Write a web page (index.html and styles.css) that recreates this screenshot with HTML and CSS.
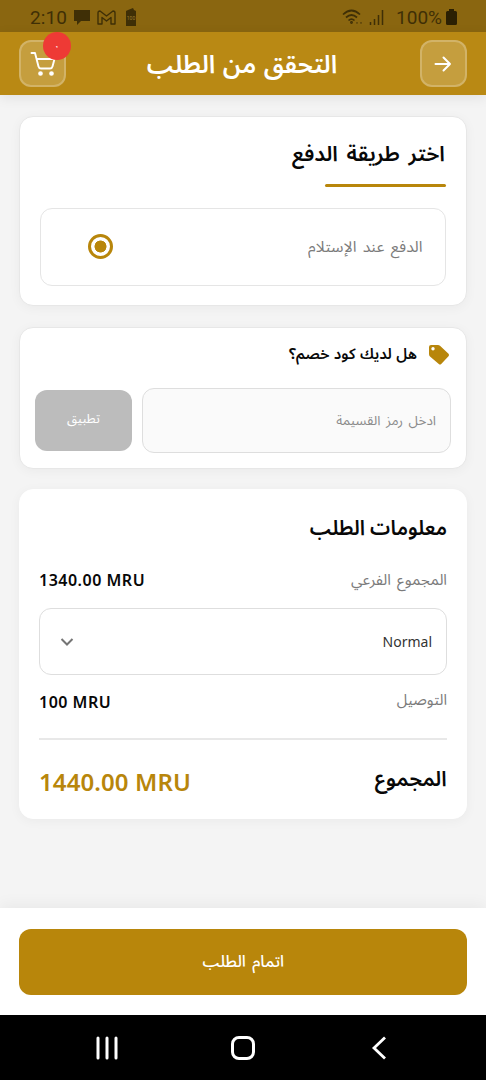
FILE: index.html
```html
<!DOCTYPE html>
<html lang="ar" dir="rtl">
<head>
<meta charset="utf-8">
<title>التحقق من الطلب</title>
<link rel="stylesheet" href="styles.css">
</head>
<body>
<div class="screen">
  <div class="status" dir="ltr">
    <div class="status-left">
      <span class="clock">2:10</span>
      <svg class="ico-chat" width="18" height="17" viewBox="0 0 18 17"><path d="M1 1h16v11H8l-4 4v-4H1z" fill="currentColor"/></svg>
      <svg class="ico-mail" width="19" height="15" viewBox="0 0 19 15"><path d="M1 14V3Q1 1 3 1l6.500 5L16 1q2 0 2 2v11h-4V7.500L9.500 11 5 7.500V14z" fill="none" stroke="currentColor" stroke-width="1.400" stroke-linejoin="round"/></svg>
      <svg class="ico-batt" width="12" height="18" viewBox="0 0 12 18"><path d="M3 2l5-2 1 2 2 1v15H1V3z" fill="currentColor"/><text x="6" y="12" font-size="5" text-anchor="middle" class="batt-text">100</text></svg>
    </div>
    <div class="status-right">
      <svg class="ico-wifi" width="21" height="16" viewBox="0 0 21 16" fill="none" stroke="currentColor" stroke-width="1.700"><path d="M1 5.500Q9.500-2.500 18 5.500M4 8.500q5.500-5 11 0M6.500 11.500q3-2.800 6 0"/><circle cx="9.500" cy="13.500" r=".6"/><path d="M14 13.800h2M18 13.800h2" opacity=".5"/></svg>
      <svg class="ico-signal" width="15" height="16" viewBox="0 0 15 16" fill="none" stroke="currentColor" stroke-width="1.500"><path d="M1.500 16v-3M5.500 16v-6M9.500 16V6M13.500 16V1"/></svg>
      <span class="percent">100%</span>
      <svg width="11" height="16" viewBox="0 0 11 16"><path d="M3 0h5v2h1.500Q11 2 11 3.500v11Q11 16 9.500 16h-8Q0 16 0 14.500v-11Q0 2 1.500 2H3z" fill="#2b2003"/></svg>
    </div>
  </div>
  <header class="header">
    <div class="square"><svg width="24" height="24" viewBox="0 0 24 24" fill="none" stroke="#fff" stroke-width="2" stroke-linecap="round" stroke-linejoin="round"><path d="M3.500 12h14.500M11.500 5.500l6.500 6.500-6.500 6.500"/></svg></div>
    <h1 class="title"><span class="fit fit-title">التحقق من الطلب</span></h1>
    <div class="square cart"><svg width="26" height="26" viewBox="0 0 26 26" fill="none" stroke="#fff" stroke-width="1.900" stroke-linecap="round" stroke-linejoin="round"><path d="M1.500 2H5l3.500 13.500q.5 2 2.500 2h9q2 0 2.500-2L24.500 8H6.500"/><circle cx="10.500" cy="22.500" r="1.400" fill="#fff"/><circle cx="21.500" cy="22.500" r="1.400" fill="#fff"/></svg><span class="badge">٠</span></div>
  </header>
  <main class="content">
    <section class="card pay">
      <h2 class="heading"><span class="fit fit-pay">اختر طريقة الدفع</span></h2>
      <div class="underline"></div>
      <div class="option"><span class="muted"><span class="fit fit-cod">الدفع عند الإستلام</span></span><span class="radio"></span></div>
    </section>
    <section class="card coupon">
      <div class="coupon-head"><svg width="22" height="22" viewBox="0 0 22 22"><path d="M1 3Q1 1 3 1h7q1 0 2 .8l8.500 8q1.200 1.200 0 2.400l-7.300 7.800q-1.200 1.200-2.400 0L2 12.500Q1 11.500 1 10z" fill="#b8860b"/><circle cx="5" cy="4.800" r="1.700" fill="#fff"/></svg><span class="question"><span class="fit fit-question">هل لديك كود خصم؟</span></span></div>
      <div class="coupon-row"><div class="field"><span class="fit fit-field">ادخل رمز القسيمة</span></div><div class="apply"><span class="fit fit-apply">تطبيق</span></div></div>
    </section>
    <section class="card summary">
      <h2 class="heading"><span class="fit fit-info">معلومات الطلب</span></h2>
      <div class="row subtotal"><span class="muted"><span class="fit fit-sub">المجموع الفرعي</span></span><b class="amount" dir="ltr">1340.00 MRU</b></div>
      <div class="select"><span class="normal">Normal</span><svg width="14" height="10" viewBox="0 0 14 10" fill="none" stroke="#757575" stroke-width="2"><path d="M1.500 2L7 7.500 12.500 2"/></svg></div>
      <div class="row delivery"><span class="muted"><span class="fit fit-del">التوصيل</span></span><b class="amount" dir="ltr">100 MRU</b></div>
      <div class="row total"><span class="total-label"><span class="fit fit-total">المجموع</span></span><b class="total-amount" dir="ltr">1440.00 MRU</b></div>
    </section>
  </main>
  <footer class="checkout"><div class="submit"><span class="fit fit-submit">اتمام الطلب</span></div></footer>
  <nav class="nav" dir="ltr">
    <svg width="24" height="24" viewBox="0 0 24 24" stroke="#fff" stroke-width="3" stroke-linecap="round"><path d="M3 2v20M12 2v20M21 2v20"/></svg>
    <svg width="26" height="26" viewBox="0 0 26 26" fill="none" stroke="#fff" stroke-width="3"><rect x="2.500" y="2.500" width="21" height="21" rx="6.500"/></svg>
    <svg width="24" height="24" viewBox="0 0 24 24" fill="none" stroke="#fff" stroke-width="2.800"><path d="M18 1.500L7 12l11 10.500"/></svg>
  </nav>
</div>
</body>
</html>
```
FILE: styles.css
```css
* { box-sizing: border-box; }
body { margin: 0; background: #f4f4f4; font-family: "Noto Sans", "Noto Sans Arabic", "DejaVu Sans", sans-serif; color: #080808; }
h1, h2 { margin: 0; font-weight: 600; }
svg { display: block; flex: none; }
.screen { width: 486px; height: 1080px; display: flex; flex-direction: column; overflow: hidden; }
.fit { display: inline-block; white-space: nowrap; transform-origin: right center; }
.fit-title { word-spacing: 1px; transform: translate(-1px, -1px); }
.fit-pay { word-spacing: 3px; transform: translate(-1px, -2px) scaleX(1.02); }
.fit-cod { word-spacing: 2px; transform: scaleX(1.055); }
.fit-question { word-spacing: .5px; transform: translate(-1px, -1px); }
.fit-field { word-spacing: 2px; transform: scaleX(1.04); }
.fit-apply { transform: translateY(-2px); }
.fit-info { transform: translateY(-1px) scaleX(.96); }
.fit-sub { word-spacing: 2px; transform: scaleX(1.02); }
.fit-del { transform: translateY(-2px); }
.fit-total { transform: translateY(-3px) scaleX(.99); }
.fit-submit { word-spacing: 2px; transform: translateX(1px) scaleX(1.02); }
.status { height: 32px; flex: none; padding: 2px 29px 0 30px; display: flex; justify-content: space-between; align-items: center; background: #8a6610; color: #3f2f06; font-family: Roboto, sans-serif; font-size: 19px; letter-spacing: .3px; }
.status-left, .status-right { display: flex; align-items: center; }
.clock { margin-right: 6px; letter-spacing: .1px; }
.ico-mail { margin: 0 9px 0 6px; }
.batt-text { fill: #9c7a2c; letter-spacing: 0; }
.ico-signal { margin: 0 12px 0 6px; }
.percent { margin-right: 4px; letter-spacing: 0; }
.header { height: 63px; flex: none; padding: 0 19px; display: flex; align-items: center; justify-content: space-between; background: #b98914; box-shadow: 0 3px 12px rgba(0,0,0,.08); }
.square { width: 47px; height: 47px; border: 2px solid rgba(255,255,255,.22); border-radius: 12px; background: rgba(255,255,255,.18); display: flex; align-items: center; justify-content: center; position: relative; }
.badge { position: absolute; left: 22px; top: -10px; width: 28px; height: 28px; border-radius: 50%; background: #ee3a35; color: #fff; font-size: 11px; line-height: 28px; text-align: center; }
.title { color: #fff; font-size: 25px; line-height: 40px; }
.content { flex: 1; padding: 21px 19px 0; }
.card { background: #fff; border: 1px solid #e7e7e7; border-radius: 14px; box-shadow: 0 2px 12px rgba(0,0,0,.045); }
.pay { height: 190px; padding: 20px; }
.heading { font-size: 21px; line-height: 36px; }
.underline { width: 121px; height: 3px; margin-top: 11px; border-radius: 2px; background: #b8860b; }
.option { height: 78px; margin-top: 21px; padding: 0 23px 0 47px; border: 1px solid #e5e5e5; border-radius: 12px; display: flex; align-items: center; justify-content: space-between; }
.muted { color: #7b7b7b; font-size: 15px; }
.radio { width: 25px; height: 25px; margin-top: -1px; border: 3px solid #b8860b; border-radius: 50%; background: radial-gradient(circle, #b8860b 5.700px, transparent 6.300px); }
.coupon { height: 142px; margin-top: 21px; padding: 15px 15px 0; }
.coupon-head { height: 24px; display: flex; align-items: center; gap: 10px; padding-right: 1px; }
.question { font-size: 15px; font-weight: 600; }
.coupon-row { display: flex; align-items: center; gap: 10px; margin-top: 21px; }
.field { flex: 1; height: 65px; border: 1px solid #dedede; border-radius: 12px; background: #fafafa; color: #8b8b8b; font-size: 13px; padding-right: 14px; display: flex; align-items: center; }
.apply { width: 97px; height: 61px; border-radius: 12px; background: #bcbcbc; color: #fff; font-size: 13px; display: flex; align-items: center; justify-content: center; }
.summary { height: 330px; margin-top: 20px; padding: 20px 19px 0; border-color: #fff; }
.row { display: flex; align-items: center; justify-content: space-between; }
.subtotal { height: 62px; padding-top: 6px; }
.amount { font-size: 16px; font-weight: 600; letter-spacing: .5px; }
.select { height: 67px; padding: 0 14px 0 20px; border: 1px solid #dedede; border-radius: 12px; display: flex; align-items: center; justify-content: space-between; }
.normal { font-size: 14px; color: #333; }
.delivery { height: 65px; padding-bottom: 10px; border-bottom: 2px solid #e8e8e8; }
.total { height: 79px; padding-top: 4px; }
.total-label { font-size: 21px; font-weight: 600; }
.total-amount { color: #b8860b; font-size: 24px; font-weight: 600; letter-spacing: .1px; }
.checkout { height: 107px; flex: none; padding: 21px 19px 20px; background: #fff; box-shadow: 0 -3px 15px rgba(0,0,0,.05); }
.submit { height: 66px; border-radius: 12px; background: #b8860b; color: #fff; font-size: 16px; font-weight: 500; display: flex; align-items: center; justify-content: center; }
.nav { height: 65px; flex: none; padding: 0 95px; background: #000; display: flex; align-items: center; justify-content: space-between; }
```
